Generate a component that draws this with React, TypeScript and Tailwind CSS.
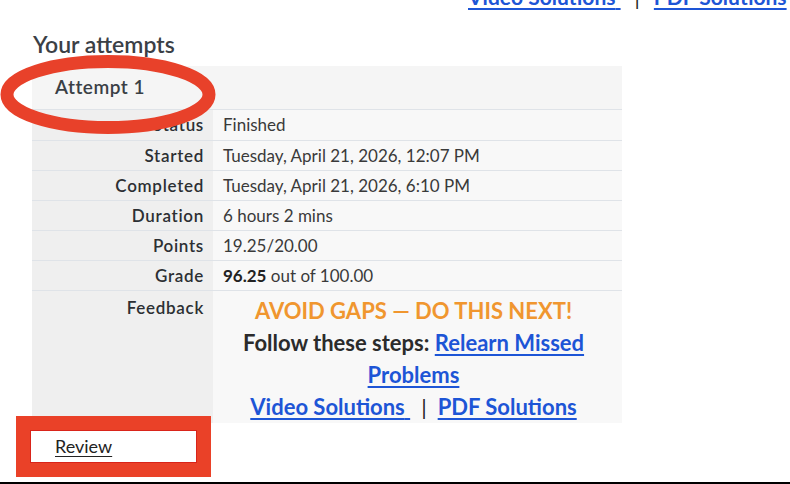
import React from 'react';

const rows: { label: string; value: React.ReactNode }[] = [
  { label: 'Status', value: 'Finished' },
  { label: 'Started', value: 'Tuesday, April 21, 2026, 12:07 PM' },
  { label: 'Completed', value: 'Tuesday, April 21, 2026, 6:10 PM' },
  { label: 'Duration', value: '6 hours 2 mins' },
  { label: 'Points', value: '19.25/20.00' },
  {
    label: 'Grade',
    value: (
      <>
        <b className="font-bold text-[#222]">96.25</b> out of 100.00
      </>
    ),
  },
];

function SolutionLinks({ gap }: { gap: string }) {
  return (
    <>
      <a href="#" className="text-[#1d55d6] underline underline-offset-[3px]">
        Video Solutions{' '}
      </a>
      <span className={`${gap} font-normal text-[#222]`}>|</span>
      <a href="#" className="text-[#1d55d6] underline underline-offset-[3px]">
        PDF Solutions
      </a>
    </>
  );
}

export default function App() {
  return (
    <div className="relative flex h-[484px] flex-col overflow-hidden bg-white font-['Lato','Liberation_Sans',sans-serif] text-[#333]">
      {/* leftover links from the block above, cut by the top edge */}
      <div className="-mt-[19px] ml-[468px] h-[32px] whitespace-nowrap text-[21px] font-bold leading-[32px]">
        <SolutionLinks gap="mx-[14px]" />
      </div>

      <h3 className="ml-[33px] mt-[19px] text-[23px] font-semibold leading-[24px] text-[#3b4046]">
        Your attempts
      </h3>

      {/* attempt summary table */}
      <div className="ml-[32px] mt-[10px] w-[590px] text-[17px]">
        <div className="flex h-[44px] items-center border-b border-[#dfe3e8] bg-[#f5f5f5] pl-[23px] text-[19px] font-semibold tracking-[0.5px] text-[#3a3f45]">
          Attempt 1
        </div>
        {rows.map((r, i) => (
          <div
            key={r.label}
            className={`grid h-[30px] grid-cols-[181px_409px] leading-[29px] ${i > 0 ? 'border-t border-[#dfe3e8]' : ''}`}
          >
            <div className="bg-[#efefef] pr-[9px] text-right font-semibold tracking-[0.7px] text-[#2c2f33]">
              {r.label}
            </div>
            <div className="bg-[#f8f8f8] pl-[10px] text-[#3a3a3a]">{r.value}</div>
          </div>
        ))}
        <div className="grid grid-cols-[181px_409px] border-t border-[#dfe3e8]">
          <div className="bg-[#efefef] pr-[9px] pt-[2px] text-right font-semibold tracking-[0.7px] leading-[30px] text-[#2c2f33]">
            Feedback
          </div>
          <div className="bg-[#f8f8f8] pl-[2px] pr-[10px] pt-[4px] text-center text-[22px] font-bold leading-[32px]">
            <div className="text-[#f0962f]">AVOID GAPS — DO THIS NEXT!</div>
            <div className="text-[#2b2b2b]">
              Follow these steps:{' '}
              <a href="#" className="text-[#1d55d6] underline underline-offset-[3px]">
                Relearn Missed Problems
              </a>
            </div>
            <div className="whitespace-nowrap">
              <SolutionLinks gap="mx-[11px]" />
            </div>
          </div>
        </div>
      </div>

      {/* highlighted review button */}
      <div className="relative ml-[16px] -mt-[7px] w-[195px] bg-[#ea4128] px-[14px] py-[14px]">
        <div className="flex h-[33px] items-center border border-[#d9241a] bg-white pl-[24px]">
          <a href="#" className="text-[18px] text-[#222] underline underline-offset-[3px]">
            Review
          </a>
        </div>
      </div>

      <div className="mt-auto h-[2px] bg-black" />

      {/* red annotation ring round the attempt title */}
      <svg className="pointer-events-none absolute left-0 top-[55px]" width="218" height="80" viewBox="0 0 218 80">
        <ellipse cx="108" cy="39.5" rx="101" ry="33" fill="none" stroke="#e8412a" strokeWidth="13" />
      </svg>
    </div>
  );
}
